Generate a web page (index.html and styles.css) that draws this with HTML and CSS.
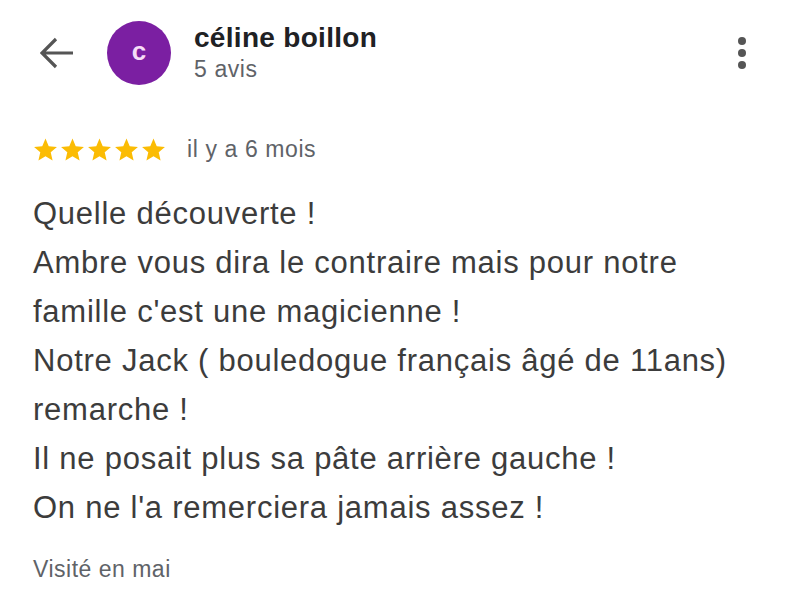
FILE: index.html
```html
<!DOCTYPE html>
<html lang="fr">
<head>
  <meta charset="UTF-8" />
  <meta name="viewport" content="width=device-width, initial-scale=1.0"/>
  <title>Avis</title>
  <link rel="stylesheet" href="styles.css">
</head>
<body>
  <div class="review">
    <div class="header">
      <svg class="back" width="34" height="32" viewBox="0 0 34 32">
        <path d="M33 16H3M16 2L2 16l14 14" fill="none" stroke="#555" stroke-width="3.2"/>
      </svg>
      <div class="avatar">c</div>
      <div class="author">
        <div class="name">céline boillon</div>
        <div class="count">5 avis</div>
      </div>
      <div class="more">
        <span></span><span></span><span></span>
      </div>
    </div>

    <div class="rating">
      <div class="stars">
        <svg viewBox="0 0 24 24"><path d="M12 1.5l3.1 7.3 7.9.7-6 5.2 1.8 7.8L12 18.4l-6.8 4.1 1.8-7.8-6-5.2 7.9-.7z"/></svg>
        <svg viewBox="0 0 24 24"><path d="M12 1.5l3.1 7.3 7.9.7-6 5.2 1.8 7.8L12 18.4l-6.8 4.1 1.8-7.8-6-5.2 7.9-.7z"/></svg>
        <svg viewBox="0 0 24 24"><path d="M12 1.5l3.1 7.3 7.9.7-6 5.2 1.8 7.8L12 18.4l-6.8 4.1 1.8-7.8-6-5.2 7.9-.7z"/></svg>
        <svg viewBox="0 0 24 24"><path d="M12 1.5l3.1 7.3 7.9.7-6 5.2 1.8 7.8L12 18.4l-6.8 4.1 1.8-7.8-6-5.2 7.9-.7z"/></svg>
        <svg viewBox="0 0 24 24"><path d="M12 1.5l3.1 7.3 7.9.7-6 5.2 1.8 7.8L12 18.4l-6.8 4.1 1.8-7.8-6-5.2 7.9-.7z"/></svg>
      </div>
      <span class="date">il y a 6 mois</span>
    </div>

    <p class="text">Quelle découverte !<br>
Ambre vous dira le contraire mais pour notre famille c'est une magicienne !<br>
Notre Jack ( bouledogue français âgé de 11ans) remarche !<br>
Il ne posait plus sa pâte arrière gauche !<br>
On ne l'a remerciera jamais assez !</p>

    <div class="visit">Visité en mai</div>
  </div>
</body>
</html>
```

FILE: styles.css
```css
body {
  margin: 0;
  background: #fff;
  font-family: 'Liberation Sans', Arial, sans-serif;
}

.review {
  padding: 21px 33px 0 33px;
}

.header {
  display: flex;
  align-items: center;
  height: 64px;
}

.back {
  margin-left: 7px;
  margin-right: 33px;
}

.avatar {
  width: 64px;
  height: 64px;
  border-radius: 50%;
  background-color: #7b1fa2;
  color: #f6ddf7;
  font-size: 26px;
  font-weight: bold;
  display: flex;
  align-items: center;
  justify-content: center;
  padding-bottom: 4px;
  box-sizing: border-box;
}

.author {
  margin-left: 23px;
  flex: 1;
  align-self: flex-start;
}

.name {
  font-size: 28px;
  font-weight: bold;
  letter-spacing: 0.3px;
  color: #202124;
  line-height: 34px;
}

.count {
  font-size: 23px;
  letter-spacing: 0.6px;
  color: #5f6368;
  line-height: 28px;
}

.more {
  display: flex;
  flex-direction: column;
  gap: 4px;
  margin-right: 20px;
}

.more span {
  width: 8px;
  height: 8px;
  border-radius: 50%;
  background-color: #555;
}

.rating {
  display: flex;
  align-items: center;
  margin-top: 51px;
}

.stars {
  display: flex;
  gap: 2px;
}

.stars svg {
  width: 25px;
  height: 25px;
  fill: #fbbc04;
}

.date {
  margin-left: 21px;
  font-size: 23px;
  letter-spacing: 0.6px;
  color: #5f6368;
}

.text {
  margin: 26px 0 0 0;
  width: 740px;
  font-size: 31px;
  letter-spacing: 0.75px;
  line-height: 49px;
  color: #3c3c3c;
}

.visit {
  margin-top: 24px;
  font-size: 23px;
  letter-spacing: 0.5px;
  color: #5f6368;
}
```
